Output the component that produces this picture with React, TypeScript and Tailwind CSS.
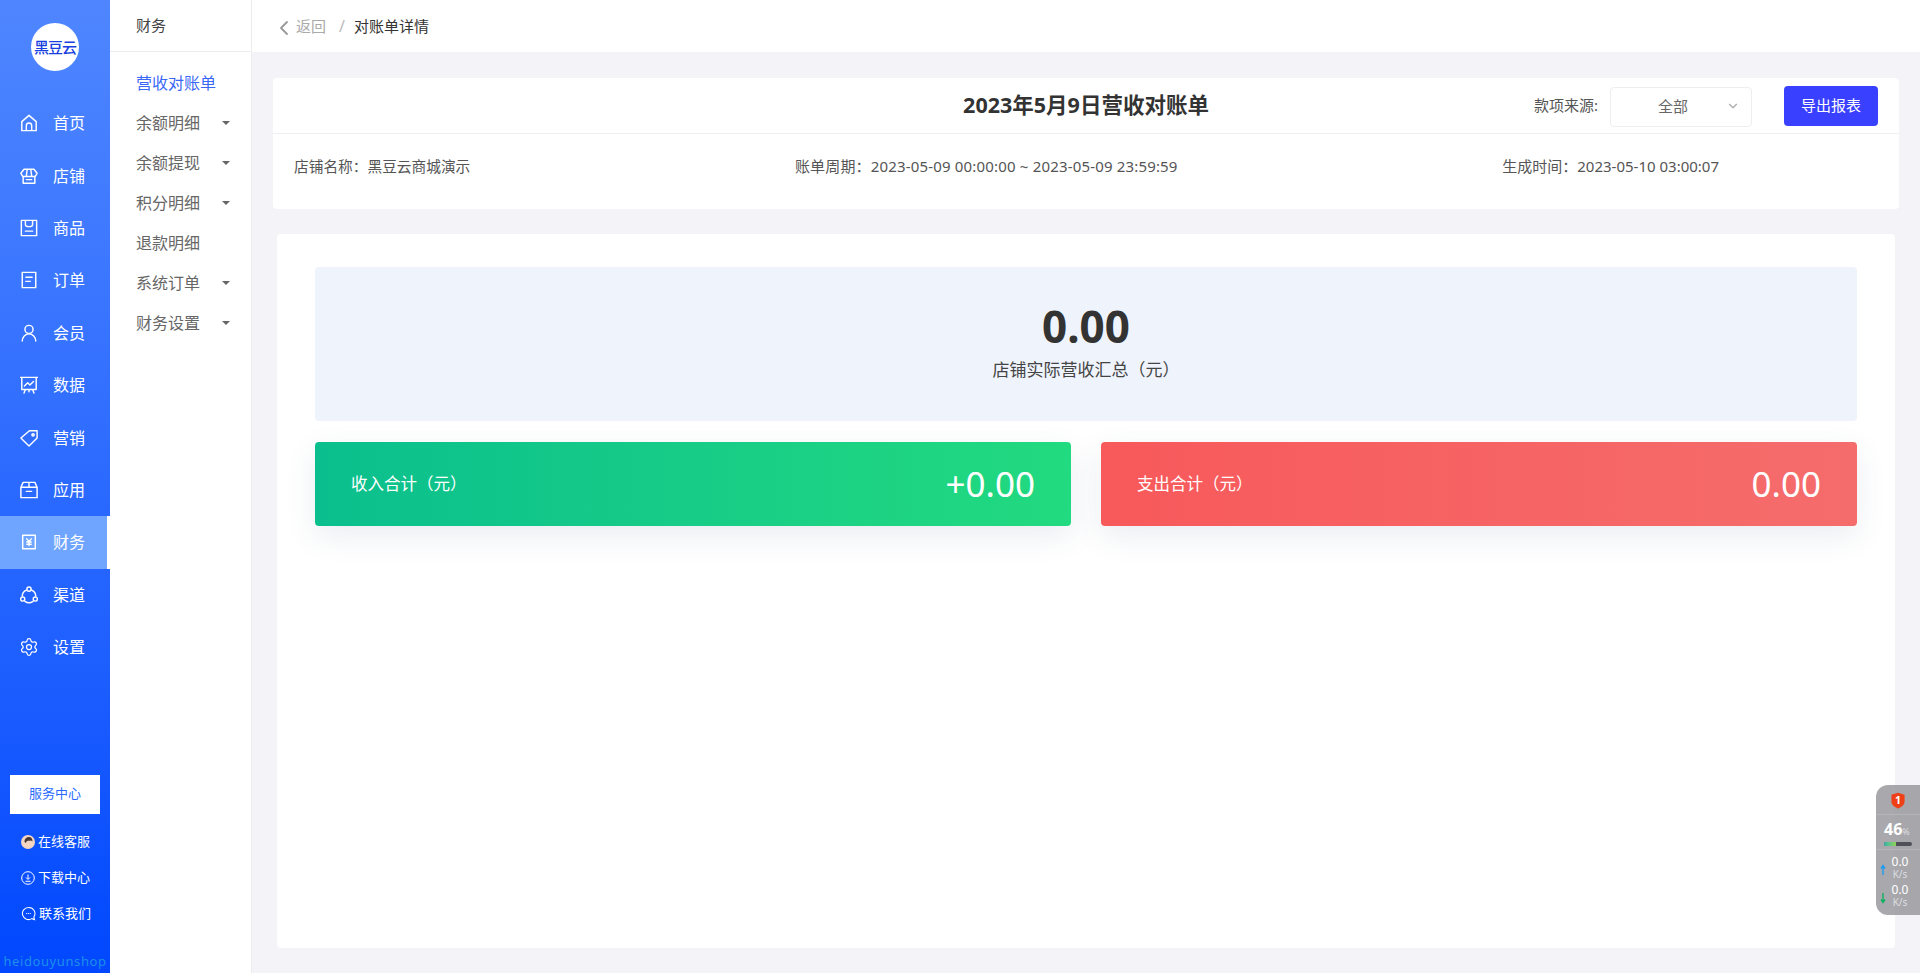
import { ChevronDown, ChevronLeft, Settings } from 'lucide-react'
import type { ReactNode } from 'react'

const font = { fontFamily: '"Noto Sans", "Noto Sans CJK SC", sans-serif' }

function Ico({ children }: { children: ReactNode }) {
  return (
    <svg viewBox="0 0 20 20" fill="none" stroke="currentColor" strokeWidth="1.6" strokeLinejoin="round" strokeLinecap="round" className="w-[18px] h-[18px] shrink-0">
      {children}
    </svg>
  )
}

const navItems: { label: string; active?: boolean; icon: ReactNode }[] = [
  { label: '首页', icon: <Ico><path d="M2 8.500 10 1.500l8 7V18.500H2ZM7 18.500V13a3 3 0 0 1 6 0v5.500" /></Ico> },
  { label: '店铺', icon: <Ico><path d="M4.500 2.500h11L19 7l-2 3.500H3L1 7ZM3.500 10.500v7.500h13v-7.500M7 10.500 8 2.500M13 10.500l-1-8M7 14h6" /></Ico> },
  { label: '商品', icon: <Ico><path d="M1.500 1.500h17v17h-17ZM6 1.500V6c0 1.500 1.500 2.500 4 2.500s4-1 4-2.500V1.500M6 13.500h8" /></Ico> },
  { label: '订单', icon: <Ico><path d="M2.500 1.500h15v17h-15ZM6.500 7h7M6.500 11.500h5" /></Ico> },
  { label: '会员', icon: <Ico><circle cx="10" cy="6" r="4.500" /><path d="M2.500 19c0-4.500 3.500-8 7.500-8s7.500 3.500 7.500 8" /></Ico> },
  { label: '数据', icon: <Ico><path d="M0.500 1.500h19M2 1.500V15h16V1.500M6 15l-1.500 4M14 15l1.500 4M10 15v2.500M5 11l3.500-3.500L11 10l4-4" /></Ico> },
  { label: '营销', icon: <Ico><path d="M10.500 2H19v8L10 19 1 10Z" /><circle cx="14.500" cy="6.500" r="1.300" /></Ico> },
  { label: '应用', icon: <Ico><path d="M1 7 3.500 1.500h13L19 7v11.500H1ZM1 7h18M10 1.500V7M7 11.500h6" /></Ico> },
  { label: '财务', active: true, icon: <Ico><path d="M3 2.500h14v15H3Z" /><path d="m7.500 6.500 2.500 3 2.500-3M7.500 10h5M7.500 12.500h5M10 9.500V14" /></Ico> },
  { label: '渠道', icon: <Ico><path d="M7 4.500a7.500 7.500 0 0 0-4.500 6.500M13 4.500a7.500 7.500 0 0 1 4.500 6.500M5.500 17a7.500 7.500 0 0 0 9 0" /><circle cx="10" cy="3.500" r="2.300" /><circle cx="3" cy="14.500" r="2.300" /><circle cx="17" cy="14.500" r="2.300" /></Ico> },
  { label: '设置', icon: <Settings className="w-[20px] h-[20px] -mx-[1px] shrink-0" strokeWidth={1.5} /> },
]

const subItems = [
  { label: '营收对账单', active: true },
  { label: '余额明细', caret: true },
  { label: '余额提现', caret: true },
  { label: '积分明细', caret: true },
  { label: '退款明细' },
  { label: '系统订单', caret: true },
  { label: '财务设置', caret: true },
]

function Sidebar() {
  return (
    <aside className="w-[110px] h-full shrink-0 flex flex-col bg-gradient-to-b from-[#4f86ff] to-[#0047ff] text-white">
      <div className="h-[97px] shrink-0 flex justify-center pt-[23px]">
        <div className="w-[48px] h-[48px] rounded-full bg-white flex items-center justify-center text-[15px] font-medium text-[#1a3fe0] tracking-[-1px] whitespace-nowrap">
          黑豆云
        </div>
      </div>
      <nav className="flex flex-col">
        {navItems.map((item) => (
          <div
            key={item.label}
            className={`h-[52.4px] flex items-center gap-[15px] pl-[20px] text-[16px] ${item.active ? 'bg-[#70a5ff] border-r-[3px] border-white' : ''}`}
          >
            {item.icon}
            <span>{item.label}</span>
          </div>
        ))}
      </nav>
      <div className="mt-auto flex flex-col items-center">
        <div className="w-[90px] h-[39px] bg-white text-[#2a6bff] text-[13px] flex items-center justify-center">服务中心</div>
        <div className="mt-[18px] flex flex-col gap-[16px] text-[13px] w-full pl-[21px]">
          <div className="h-[20px] flex items-center gap-[3px]">
            <svg viewBox="0 0 14 14" className="w-[14px] h-[14px]">
              <circle cx="7" cy="7" r="7" fill="#f6d5c2" />
              <path d="M3.500 7c0-3.500 2-5 4.500-5s3.500 2 3.500 4.500L10 5.500C8 6 5.500 5 5 8Z" fill="#4a3a35" />
            </svg>
            <span>在线客服</span>
          </div>
          <div className="h-[20px] flex items-center gap-[3px]">
            <svg viewBox="0 0 14 14" fill="none" stroke="currentColor" strokeWidth="1" className="w-[14px] h-[14px]">
              <circle cx="7" cy="7" r="6.300" />
              <path d="M7 3.500v4.500M5 6.500 7 8.500l2-2M4.500 10.300h5" />
            </svg>
            <span>下载中心</span>
          </div>
          <div className="h-[20px] flex items-center gap-[3px]">
            <svg viewBox="0 0 16 16" fill="none" stroke="currentColor" strokeWidth="1.100" className="w-[15px] h-[15px]">
              <path d="M8 1.500a6.500 6.500 0 1 0 3.500 12l3 1-.8-2.800A6.500 6.500 0 0 0 8 1.500Z" />
              <path d="M5.500 8h5" strokeDasharray="1.200 0.900" />
            </svg>
            <span>联系我们</span>
          </div>
        </div>
        <div className="mt-[28px] mb-[2px] text-[13px] tracking-[0.6px] text-[#1d8fe8] whitespace-nowrap">heidouyunshop</div>
      </div>
    </aside>
  )
}

function SubNav() {
  return (
    <aside className="w-[142px] h-full shrink-0 bg-white border-r border-[#ebebf0] flex flex-col">
      <div className="h-[52px] shrink-0 border-b border-[#ebebf0] pl-[26px] flex items-center text-[15px] text-[#444]">财务</div>
      <div className="pt-[11px] flex flex-col">
        {subItems.map((item) => (
          <div
            key={item.label}
            className={`h-[40px] pl-[26px] pr-[21px] flex items-center justify-between text-[16px] ${item.active ? 'text-[#3a67f5]' : 'text-[#666]'}`}
          >
            <span>{item.label}</span>
            {item.caret && <span className="w-0 h-0 border-x-[4px] border-x-transparent border-t-[4px] border-t-[#666]" />}
          </div>
        ))}
      </div>
    </aside>
  )
}

function Rate({ up }: { up?: boolean }) {
  return (
    <div className="flex items-center pl-[4px] h-[28px]">
      <svg viewBox="0 0 6 12" className="w-[6px] h-[12px] mt-[6px]" fill="none" stroke={up ? '#1e9bf0' : '#10b060'} strokeWidth="1.400">
        {up ? <path d="M3 11V2M1 4.500 3 1.500l2 3" /> : <path d="M3 1v9M1 7.500l2 3 2-3" />}
      </svg>
      <div className="w-[28px] text-center">
        <div className="text-[12px] leading-[13px]">0.0</div>
        <div className="text-[10px] leading-[12px] text-[#dedee0]">K/s</div>
      </div>
    </div>
  )
}

function Widget() {
  return (
    <div className="absolute right-0 top-[785px] w-[44px] h-[130px] rounded-l-[12px] bg-[#84858a]/70 flex flex-col items-center text-white">
      <div className="h-[30px] w-full flex items-center justify-center border-b border-[#b4b5b8] pt-[1px]">
        <svg viewBox="0 0 16 18" className="w-[14px] h-[17px]">
          <path d="M8 0 15.500 2.500V10c0 4-4 6.500-7.500 8-3.500-1.500-7.500-4-7.500-8V2.500Z" fill="#ee3f16" />
          <text x="8" y="13" fontSize="12" fontWeight="700" fill="#fff" textAnchor="middle">1</text>
        </svg>
      </div>
      <div className="h-[35px] w-full pl-[8px] pt-[6px] border-b border-[#b4b5b8]">
        <div className="flex items-baseline leading-[16px]">
          <span className="text-[16px] font-bold">46</span>
          <span className="text-[9px] text-[#dedee0]">%</span>
        </div>
        <div className="mt-[2px] w-[28px] h-[4px] rounded-full bg-[#505058] overflow-hidden">
          <div className="w-[12px] h-full bg-gradient-to-r from-[#29b6a8] to-[#8fd14f]" />
        </div>
      </div>
      <div className="flex flex-col pt-[3px] w-full">
        <Rate up />
        <Rate />
      </div>
    </div>
  )
}

export default function App() {
  return (
    <div className="relative flex w-full h-[973px] overflow-hidden bg-[#f3f3f8]" style={font}>
      <Sidebar />
      <SubNav />
      <main className="flex-1 min-w-0 flex flex-col">
        <div className="h-[52px] shrink-0 bg-white flex items-center pl-[20px] text-[15px]">
          <ChevronLeft className="w-[24px] h-[24px] text-[#999] mt-[3px]" strokeWidth={1.8} />
          <span className="text-[#aaa]">返回</span>
          <span className="text-[#bbb] ml-[13px] mr-[9px] text-[16px]">/</span>
          <span className="text-[#333]">对账单详情</span>
        </div>

        <section className="mt-[26px] mx-[21px] h-[131px] shrink-0 bg-white rounded-[4px] flex flex-col">
          <div className="h-[56px] shrink-0 border-b border-[#f0f0f3] grid grid-cols-[1fr_auto_1fr] items-center">
            <div />
            <h1 className="text-[21.5px] font-bold text-[#333]">2023年5月9日营收对账单</h1>
            <div className="flex items-center justify-end pr-[21px]">
              <span className="text-[15px] text-[#555]">款项来源:</span>
              <div className="ml-[12px] w-[142px] h-[40px] mt-[2px] border border-[#eeeeef] rounded-[4px] flex items-center pl-[47px] pr-[11px] justify-between text-[15px] text-[#666]">
                <span>全部</span>
                <ChevronDown className="w-[14px] h-[14px] text-[#aaa] -mt-[2px]" />
              </div>
              <button type="button" className="ml-[32px] w-[94px] h-[40px] rounded-[4px] bg-[#3a40ff] text-white text-[15px]">导出报表</button>
            </div>
          </div>
          <div className="flex justify-between pl-[21px] pr-[180px] pt-[21px] text-[15px] text-[#555]">
            <span className="text-[14.7px]">店铺名称：黑豆云商城演示</span>
            <span className="tracking-[0.17px]">账单周期：2023-05-09 00:00:00 ~ 2023-05-09 23:59:59</span>
            <span>生成时间：2023-05-10 03:00:07</span>
          </div>
        </section>

        <section className="mt-[25px] mx-[25px] h-[714px] shrink-0 bg-white rounded-[4px] px-[38px] pt-[33px]">
          <div className="h-[154px] rounded-[4px] bg-[#eff3fb] flex flex-col items-center justify-center pb-[8px]">
            <div className="text-[44px] leading-[56px] font-bold text-[#333]">0.00</div>
            <div className="mt-[4px] text-[17px] leading-[24px] text-[#444]">店铺实际营收汇总（元）</div>
          </div>
          <div className="mt-[21px] grid grid-cols-2 gap-[30px]">
            <div className="h-[84px] rounded-[4px] bg-gradient-to-r from-[#0abf8d] to-[#22da7f] flex items-center justify-between px-[36px] text-white shadow-[0_10px_30px_rgba(60,80,130,0.1)]">
              <span className="text-[16.5px] pt-[1px]">收入合计（元）</span>
              <span className="text-[35px]">+0.00</span>
            </div>
            <div className="h-[84px] rounded-[4px] bg-gradient-to-r from-[#f8595b] to-[#f56c6c] flex items-center justify-between px-[36px] text-white shadow-[0_10px_30px_rgba(60,80,130,0.1)]">
              <span className="text-[16.5px] pt-[1px]">支出合计（元）</span>
              <span className="text-[35px]">0.00</span>
            </div>
          </div>
        </section>
      </main>
      <Widget />
    </div>
  )
}
